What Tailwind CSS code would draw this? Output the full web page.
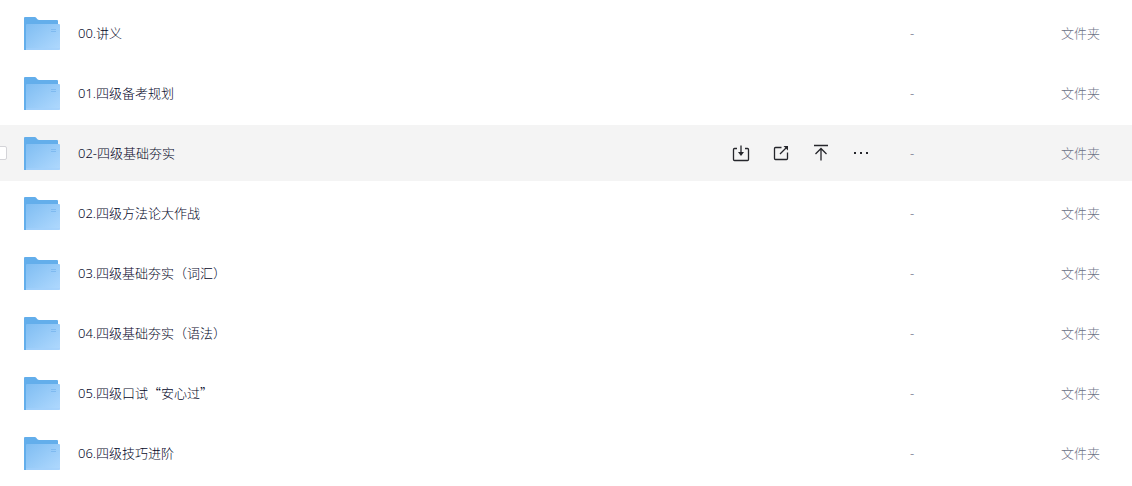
<!DOCTYPE html>
<html lang="zh-CN">
<head>
    <meta charset="UTF-8">
    <meta name="viewport" content="width=device-width, initial-scale=1.0">
    <title>文件列表</title>
    <script src="https://cdn.jsdelivr.net/npm/@tailwindcss/browser@4"></script>
</head>
<body class="bg-white overflow-x-hidden font-['Noto_Sans','Noto_Sans_CJK_SC',sans-serif] font-light text-[13px] leading-5 text-[#03061f]">
    <!-- Shared icon shapes (kept rendered at zero size so the gradient resolves) -->
    <svg class="absolute w-0 h-0" aria-hidden="true">
        <defs>
            <linearGradient id="folder-front" x1="0" y1="0" x2="1" y2="1">
                <stop offset="0" stop-color="#7fbdf2"/>
                <stop offset="1" stop-color="#b0d9fe"/>
            </linearGradient>
        </defs>
        <symbol id="folder" viewBox="0 0 36 33">
            <path fill="#63aeeb" d="M0 1a1 1 0 0 1 1-1h10c1.500 0 2 3 4 3h18a1 1 0 0 1 1 1v29H0z"/>
            <path fill="url(#folder-front)" d="M2 8a1 1 0 0 1 1-1h32a1 1 0 0 1 1 1v24a1 1 0 0 1-1 1H2z"/>
            <path fill="#a3d0fb" opacity=".6" d="M2 31h34v1a1 1 0 0 1-1 1H2z"/>
            <path stroke="#7fbaf0" d="M27 12.500h5M27 14.500h5"/>
        </symbol>
    </svg>

    <main class="pt-px">
        <table class="w-full table-fixed border-separate border-spacing-x-0 border-spacing-y-1">
            <colgroup>
                <col class="w-6">
                <col>
                <col class="w-[151px]">
                <col class="w-[71px]">
            </colgroup>
            <tbody id="file-list"></tbody>
        </table>
    </main>

    <template id="row-actions">
        <div class="flex shrink-0 text-[#25262b]">
            <button type="button" aria-label="下载" class="w-10 h-10 flex items-center justify-center cursor-pointer">
                <svg class="size-5" viewBox="0 0 20 20" fill="none" stroke="currentColor" stroke-width="1.3">
                    <path d="M6 5.500H3.500a1 1 0 0 0-1 1V16.500a1 1 0 0 0 1 1h13a1 1 0 0 0 1-1V6.500a1 1 0 0 0-1-1H14M10 2.500v8"/>
                    <path fill="currentColor" stroke="none" d="M7 9h6l-3 4z"/>
                </svg>
            </button>
            <button type="button" aria-label="分享" class="w-10 h-10 flex items-center justify-center cursor-pointer">
                <svg class="size-5" viewBox="0 0 20 20" fill="none" stroke="currentColor" stroke-width="1.3">
                    <path d="M10.500 4.500h-6a1 1 0 0 0-1 1v10a1 1 0 0 0 1 1h11a1 1 0 0 0 1-1V9.500M9 11l6-6"/>
                    <path fill="currentColor" stroke="none" d="M12.500 3H17v4.500z"/>
                </svg>
            </button>
            <button type="button" aria-label="置顶" class="w-10 h-10 flex items-center justify-center cursor-pointer">
                <svg class="size-5" viewBox="0 0 20 20" fill="none" stroke="currentColor" stroke-width="1.3">
                    <path d="M3 2.500h14M10 17.500V6M4.500 11 10 5.500l5.500 5.500"/>
                </svg>
            </button>
            <button type="button" aria-label="更多" class="w-10 h-10 flex items-center justify-center cursor-pointer">
                <svg class="size-5" viewBox="0 0 20 20" fill="currentColor">
                    <path d="M3 9h2v2H3zM9 9h2v2H9zM15 9h2v2h-2z"/>
                </svg>
            </button>
        </div>
    </template>

    <script>
        const files = [
            { name: '00.讲义' },
            { name: '01.四级备考规划' },
            { name: '02-四级基础夯实', active: true },
            { name: '02.四级方法论大作战' },
            { name: '03.四级基础夯实（词汇）' },
            { name: '04.四级基础夯实（语法）' },
            { name: '05.四级口试“安心过”' },
            { name: '06.四级技巧进阶' }
        ];

        const list = document.getElementById('file-list');
        const actions = document.getElementById('row-actions');

        // Curly quotes take the full-width glyphs of the Chinese font
        const formatName = (name) => name.replace(/“.*”/, (quoted) => `<span class="font-['Noto_Sans_CJK_SC',sans-serif]">${quoted}</span>`);

        files.forEach((file) => {
            const row = document.createElement('tr');
            row.className = file.active ? 'h-14 bg-[#f4f4f4]' : 'h-14';
            row.innerHTML = `
                <td class="p-0">
                    ${file.active ? `<input type="checkbox" aria-label="选择 ${file.name}" class="block appearance-none size-3.5 -ml-[7px] rounded-xs border border-[#d4d4d8] bg-white">` : ''}
                </td>
                <td class="p-0">
                    <div class="file-cell flex items-center pr-[29px]">
                        <svg class="w-9 h-[33px] shrink-0" aria-hidden="true"><use href="#folder"/></svg>
                        <a href="#" class="ml-[18px] flex-1 truncate">${formatName(file.name)}</a>
                    </div>
                </td>
                <td class="p-0 text-[#6c7186]">-</td>
                <td class="p-0 text-[#6c7186]">文件夹</td>
            `;
            if (file.active) {
                row.querySelector('.file-cell').appendChild(actions.content.cloneNode(true));
            }
            list.appendChild(row);
        });
    </script>
</body>
</html>
